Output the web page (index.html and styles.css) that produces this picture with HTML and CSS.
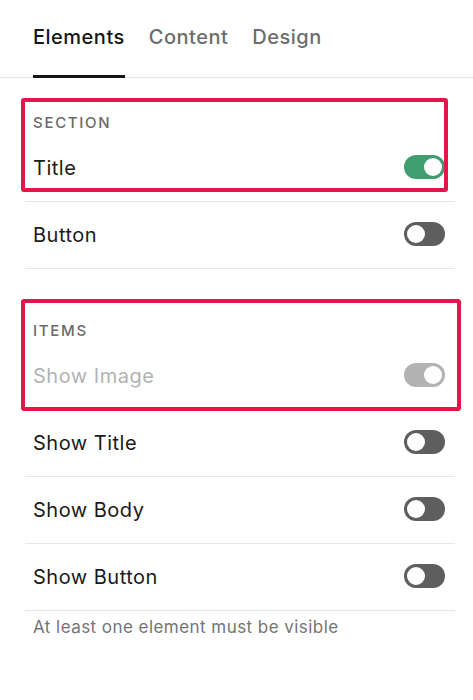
FILE: index.html
```html
<!DOCTYPE html>
<html lang="en">
<head>
<meta charset="utf-8">
<title>Elements</title>
<link rel="stylesheet" href="styles.css">
</head>
<body>
<div class="page">
  <nav class="tabs">
    <div class="tab active">Elements</div>
    <div class="tab">Content</div>
    <div class="tab">Design</div>
  </nav>
  <main class="list">
    <section class="group">
      <div class="group-label">SECTION</div>
      <div class="row"><span class="row-label">Title</span><span class="toggle on"></span></div>
      <div class="row"><span class="row-label">Button</span><span class="toggle"></span></div>
    </section>
    <section class="group group-items">
      <div class="group-label">ITEMS</div>
      <div class="row disabled"><span class="row-label">Show Image</span><span class="toggle on dim"></span></div>
      <div class="row"><span class="row-label">Show Title</span><span class="toggle"></span></div>
      <div class="row"><span class="row-label">Show Body</span><span class="toggle"></span></div>
      <div class="row"><span class="row-label">Show Button</span><span class="toggle"></span></div>
    </section>
    <p class="hint">At least one element must be visible</p>
  </main>
  <div class="highlight hl-section"></div>
  <div class="highlight hl-items"></div>
</div>
</body>
</html>
```
FILE: styles.css
```css
* { box-sizing: border-box; }
html, body { margin: 0; padding: 0; background: #fff; }
body { font-family: Inter, "Noto Sans", sans-serif; color: #1a1a1a; }
.page { position: relative; width: 473px; min-height: 700px; }

.tabs {
  display: flex;
  gap: 24px;
  padding-left: 33px;
  border-bottom: 1px solid #e8e8e8;
  height: 78px;
}
.tab {
  font-size: 20px;
  font-weight: 500;
  line-height: 24px;
  letter-spacing: 0.5px;
  padding-top: 25px;
  height: 78px;
  color: #6d6d6d;
  border-bottom: 3px solid transparent;
  margin-bottom: -1px;
}
.tab.active { color: #161616; border-bottom-color: #161616; }

.list { padding: 0 18px 0 25px; }
.group { padding-top: 35px; }
.group-items { margin-top: 17px; }
.group-label {
  font-size: 15px;
  font-weight: 500;
  line-height: 20px;
  letter-spacing: 1.7px;
  color: #6a6a6a;
  padding-left: 8px;
  margin-bottom: 2px;
}
.row {
  display: flex;
  align-items: center;
  justify-content: space-between;
  height: 67px;
  padding: 0 10px 0 8px;
  border-bottom: 1px solid #e6e6e6;
}
.row-label { font-size: 20px; line-height: 24px; letter-spacing: 0.5px; color: #1a1a1a; }
.row.disabled .row-label { color: #b3b3b3; }

.toggle {
  position: relative;
  width: 41px;
  height: 24px;
  border-radius: 12px;
  background: #5e5e5e;
  margin-bottom: 2px;
}
.toggle::after {
  content: "";
  position: absolute;
  top: 3px;
  left: 3px;
  width: 18px;
  height: 18px;
  border-radius: 50%;
  background: #fff;
}
.toggle.on { background: #3f9e70; }
.toggle.on::after { left: 20px; }
.toggle.dim { background: #b3b3b3; }

.hint {
  margin: 4px 0 0;
  padding-left: 8px;
  font-size: 17px;
  line-height: 24px;
  letter-spacing: 0.45px;
  color: #747474;
}

.highlight {
  position: absolute;
  border: 4px solid #e3154b;
  border-radius: 3px;
}
.hl-section { left: 21px; top: 98px; width: 427px; height: 94px; }
.hl-items { left: 21px; top: 299px; width: 440px; height: 112px; }
```
